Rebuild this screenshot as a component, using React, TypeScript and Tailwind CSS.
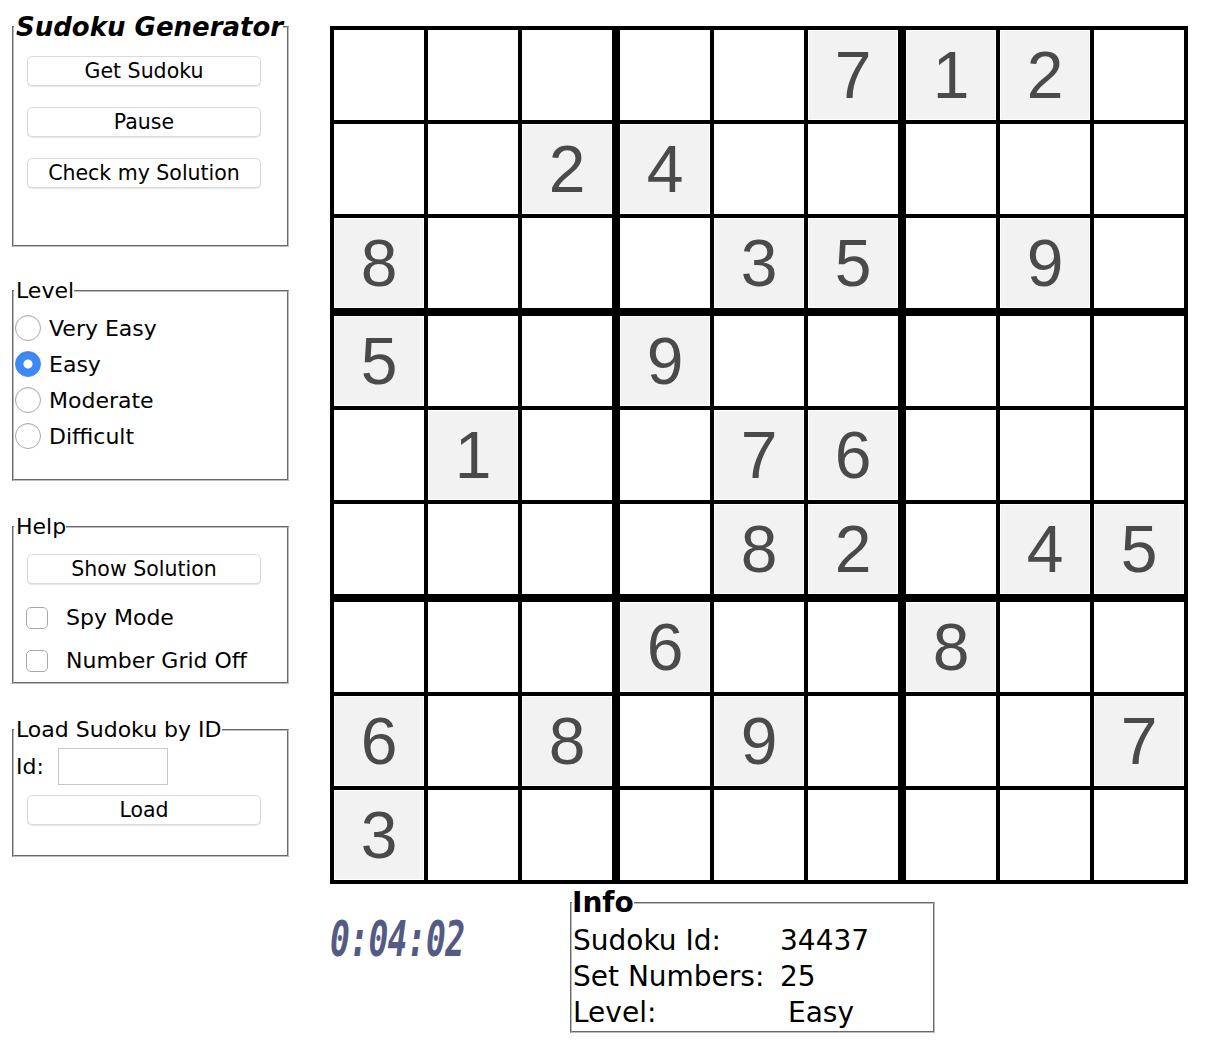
import React, { useState } from "react";

const puzzle: number[][] = [
  [0, 0, 0, 0, 0, 7, 1, 2, 0],
  [0, 0, 2, 4, 0, 0, 0, 0, 0],
  [8, 0, 0, 0, 3, 5, 0, 9, 0],
  [5, 0, 0, 9, 0, 0, 0, 0, 0],
  [0, 1, 0, 0, 7, 6, 0, 0, 0],
  [0, 0, 0, 0, 8, 2, 0, 4, 5],
  [0, 0, 0, 6, 0, 0, 8, 0, 0],
  [6, 0, 8, 0, 9, 0, 0, 0, 7],
  [3, 0, 0, 0, 0, 0, 0, 0, 0],
];

const verdana = "font-['DejaVu_Sans',Verdana,sans-serif]";

function Btn({ label }: { label: string }) {
  return (
    <button
      type="button"
      className="ml-[13px] block w-[234px] h-[30px] bg-white border border-[#dadada] rounded-[5px] shadow-[0_1px_1px_rgba(0,0,0,0.1)] text-[20.5px] leading-none text-black"
    >
      {label}
    </button>
  );
}

function Box({ legend, className, legendClass, children }: { legend: string; className?: string; legendClass?: string; children: React.ReactNode }) {
  return (
    <fieldset className={`w-[277px] border-2 border-[#bdbdbd] [border-style:groove] ${className ?? ""}`}>
      <legend className={legendClass ?? "pl-[2px] text-[22px] leading-[26px]"}>{legend}</legend>
      {children}
    </fieldset>
  );
}

export default function App() {
  const [level, setLevel] = useState("Easy");

  return (
    <div className={`flex pl-[12px] bg-white text-black min-h-[1042px] ${verdana}`}>
      {/* LEFT PANEL */}
      <div className="pt-[11px] w-[277px]">
        <Box legend="Sudoku Generator" legendClass="pl-[2px] text-[26px] leading-[32px] font-bold italic">
          <div className="h-[202px] pt-[13px] flex flex-col gap-[21px]">
            <Btn label="Get Sudoku" />
            <Btn label="Pause" />
            <Btn label="Check my Solution" />
          </div>
        </Box>

        <Box legend="Level" className="mt-[31px]">
          <div className="pt-[6px] pb-[25px]">
            {["Very Easy", "Easy", "Moderate", "Difficult"].map((l) => (
              <label key={l} className="flex items-center h-9 text-[22px]">
                <input
                  type="radio"
                  name="level"
                  checked={level === l}
                  onChange={() => setLevel(l)}
                  className="appearance-none ml-[1px] mr-[8px] w-[26px] h-[26px] rounded-full border border-[#a9a9a9] bg-white shadow-[inset_0_1px_1px_rgba(0,0,0,0.08)] checked:border-[#3c89f7] checked:bg-[radial-gradient(circle,#ffffff_4px,#3c89f7_5px)]"
                />
                {l}
              </label>
            ))}
          </div>
        </Box>

        <Box legend="Help" className="mt-[33px]">
          <div className="pt-[14px] pb-[10px]">
            <Btn label="Show Solution" />
            <label className="flex items-center mt-[22px] h-[23px] text-[22px]">
              <input type="checkbox" className="appearance-none ml-[12px] mr-[18px] w-[22px] h-[22px] rounded-[5px] border border-[#a9a9a9] bg-white" />
              Spy Mode
            </label>
            <label className="flex items-center mt-[20px] h-[23px] text-[22px]">
              <input type="checkbox" className="appearance-none ml-[12px] mr-[18px] w-[22px] h-[22px] rounded-[5px] border border-[#a9a9a9] bg-white" />
              Number Grid Off
            </label>
          </div>
        </Box>

        <Box legend="Load Sudoku by ID" className="mt-[33px]">
          <div className="pt-[5px] pb-[30px]">
            <div className="flex items-center h-[37px] text-[22px]">
              <span className="ml-[2px] w-[42px]">Id:</span>
              <input type="text" className="w-[110px] h-[37px] border border-[#c8c8c8] bg-white outline-none px-1" />
            </div>
            <div className="mt-[10px]">
              <Btn label="Load" />
            </div>
          </div>
        </Box>
      </div>

      {/* RIGHT SIDE */}
      <div className="ml-[41px] pt-[26px]">
        <div className="grid grid-cols-3 gap-2 bg-black border-4 border-black w-[858px]">
          {[0, 1, 2].map((br) =>
            [0, 1, 2].map((bc) => (
              <div key={`${br}-${bc}`} className="grid grid-cols-3 gap-1 bg-black">
                {[0, 1, 2].map((r) =>
                  [0, 1, 2].map((c) => {
                    const v = puzzle[br * 3 + r][bc * 3 + c];
                    return (
                      <div key={`${r}-${c}`} className="w-[90px] h-[90px] bg-white p-px">
                        {v ? (
                          <div className="w-full h-full bg-[#f2f2f2] flex items-center justify-center font-['Liberation_Sans',Arial,sans-serif] text-[66px] leading-none text-[#4a4a4a]">
                            {v}
                          </div>
                        ) : null}
                      </div>
                    );
                  })
                )}
              </div>
            ))
          )}
        </div>

        <div className="flex mt-[4px]">
          <div className="w-[240px] pt-[26px]">
            <div className="origin-left scale-x-[0.66] italic font-bold font-['DejaVu_Sans_Mono',monospace] text-[50px] leading-[50px] text-[#535b84] tracking-[-1px]">
              0:04:02
            </div>
          </div>

          <fieldset className="w-[365px] border-2 border-[#bdbdbd] [border-style:groove]">
            <legend className="text-[28px] leading-[30px] font-bold">Info</legend>
            <div className="pt-[5px] pl-[1px] text-[28px]">
              <div className="flex items-center h-9">
                <span className="w-[207px]">Sudoku Id:</span>
                <span>34437</span>
              </div>
              <div className="flex items-center h-9">
                <span className="w-[207px] whitespace-nowrap">Set Numbers:</span>
                <span>25</span>
              </div>
              <div className="flex items-center h-9">
                <span className="w-[207px]">Level:</span>
                <span className="pl-[8px]">Easy</span>
              </div>
            </div>
          </fieldset>
        </div>
      </div>
    </div>
  );
}
